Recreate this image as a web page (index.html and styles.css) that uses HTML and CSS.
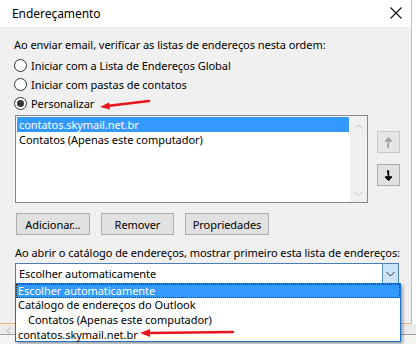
FILE: index.html
```html
<!DOCTYPE html>
<html lang="pt-BR">
<head>
    <meta charset="UTF-8">
    <title>Endereçamento</title>
    <link rel="stylesheet" href="styles.css">
</head>
<body>

    <div class="dialog">
        <!-- Title bar -->
        <div class="titlebar">
            <span class="title">Endereçamento</span>
            <svg class="close" width="12" height="12" viewBox="0 0 12 12">
                <path d="M0.5 0.5 L11.5 11.5 M11.5 0.5 L0.5 11.5" stroke="#111" stroke-width="1.1" fill="none"/>
            </svg>
        </div>

        <div class="content">
            <p class="label intro">Ao enviar email, verificar as listas de endereços nesta ordem:</p>

            <div class="radios">
                <label class="radio"><span class="dot"></span>Iniciar com a Lista de Endereços Global</label>
                <label class="radio"><span class="dot"></span>Iniciar com pastas de contatos</label>
                <label class="radio checked"><span class="dot"></span>Personalizar</label>
            </div>

            <div class="list-row">
                <div class="listbox">
                    <div class="items">
                        <div class="item selected">contatos.skymail.net.br</div>
                        <div class="item">Contatos (Apenas este computador)</div>
                    </div>
                    <div class="scrollbar">
                        <svg width="9" height="6" viewBox="0 0 9 6"><path d="M0.5 5 L4.5 1 L8.5 5" stroke="#c2c2c2" fill="none"/></svg>
                        <svg width="9" height="6" viewBox="0 0 9 6"><path d="M0.5 1 L4.5 5 L8.5 1" stroke="#c2c2c2" fill="none"/></svg>
                    </div>
                </div>
                <div class="move-buttons">
                    <button class="small-btn disabled">
                        <svg width="7" height="11" viewBox="0 0 7 11"><path d="M3.5 1 V10 H2 M0.5 4 L3.5 1 L6.5 4 Z" stroke="#a0a0a0" stroke-width="1.4" fill="#a0a0a0"/></svg>
                    </button>
                    <button class="small-btn">
                        <svg width="7" height="11" viewBox="0 0 7 11"><path d="M3.5 10 V1 H2 M0.5 7 L3.5 10 L6.5 7 Z" stroke="#000" stroke-width="1.4" fill="#000"/></svg>
                    </button>
                </div>
            </div>

            <div class="buttons">
                <button class="btn btn-add">Adicionar...</button>
                <button class="btn btn-remove">Remover</button>
                <button class="btn btn-props">Propriedades</button>
            </div>

            <p class="label second">Ao abrir o catálogo de endereços, mostrar primeiro esta lista de endereços:</p>

            <div class="combo">
                <span class="combo-text">Escolher automaticamente</span>
                <span class="combo-arrow">
                    <svg width="9" height="6" viewBox="0 0 9 6"><path d="M0.5 1 L4.5 5 L8.5 1" stroke="#333" fill="none"/></svg>
                </span>
            </div>
        </div>
    </div>

    <!-- window behind the dialog -->
    <div class="back-strip">
        <svg width="6" height="8" viewBox="0 0 6 8"><path d="M5 0.5 L1 4 L5 7.5" stroke="#b5b5b5" fill="none"/></svg>
    </div>

    <!-- Open drop-down list -->
    <div class="dropdown">
        <div class="drop-item active">Escolher automaticamente</div>
        <div class="drop-item">Catálogo de endereços do Outlook</div>
        <div class="drop-item indent">Contatos (Apenas este computador)</div>
        <div class="drop-item">contatos.skymail.net.br</div>
    </div>

    <!-- Red arrows drawn on the screenshot -->
    <svg class="arrow arrow-one" width="52" height="12" viewBox="0 0 52 12">
        <path d="M50 2 L8 7" stroke="#e8141c" stroke-width="2.4" fill="none" stroke-linecap="round"/>
        <path d="M1 8 L10 3.5 L11 10.5 Z" fill="#e8141c"/>
    </svg>
    <svg class="arrow arrow-two" width="96" height="10" viewBox="0 0 96 10">
        <path d="M94 4 L9 5" stroke="#e8141c" stroke-width="2.4" fill="none" stroke-linecap="round"/>
        <path d="M1 5 L11 1 L11 9 Z" fill="#e8141c"/>
    </svg>

</body>
</html>
```

FILE: styles.css
```css
/* General */
body {
    margin: 0;
    width: 416px;
    height: 344px;
    overflow: hidden;
    background: #ffffff;
    font-family: 'Noto Sans', 'Open Sans', sans-serif;
    font-size: 11px;
    letter-spacing: -0.05px;
    color: #000;
    position: relative;
}

.dialog {
    width: 411px;
    height: 323px;
    border-right: 1px solid #ebb574;
    border-bottom: 1px solid #ebb574;
    display: flex;
    flex-direction: column;
}

/* Title bar */
.titlebar {
    height: 27px;
    background: #fff;
    display: flex;
    align-items: center;
    justify-content: space-between;
    padding: 0 9px 0 12px;
}

.title {
    font-size: 12px;
    margin-top: -1px;
}

.close {
    margin-bottom: 1px;
}

/* Content area */
.content {
    flex: 1;
    background: #f0f0f0;
    padding: 0 0 0 15px;
}

.label {
    margin: 0;
    line-height: 15px;
    white-space: nowrap;
}

.intro {
    padding-top: 10px;
    margin-left: -1px;
}

/* Radios */
.radios {
    margin-top: 4px;
    display: flex;
    flex-direction: column;
}

.radio {
    height: 19px;
    display: flex;
    align-items: center;
    gap: 4px;
    margin-left: -1px;
}

.dot {
    width: 11px;
    height: 11px;
    border: 1px solid #333;
    border-radius: 50%;
    background: #fff;
    display: flex;
    align-items: center;
    justify-content: center;
}

.radio.checked .dot::after {
    content: "";
    width: 7px;
    height: 7px;
    border-radius: 50%;
    background: #333;
}

/* Address list */
.list-row {
    margin-top: 2px;
    display: flex;
    align-items: flex-start;
    gap: 9px;
}

.listbox {
    width: 351px;
    height: 86px;
    border: 1px solid #828790;
    background: #fff;
    display: flex;
}

.items {
    flex: 1;
    padding: 1px;
}

.item {
    height: 15px;
    line-height: 15px;
    padding-left: 2px;
    white-space: nowrap;
}

.item.selected {
    background: #3399ff;
    color: #fff;
}

.scrollbar {
    width: 17px;
    background: #f0f0f0;
    display: flex;
    flex-direction: column;
    justify-content: space-between;
    align-items: center;
    padding: 8px 0 5px;
}

.move-buttons {
    display: flex;
    flex-direction: column;
    gap: 11px;
    padding-top: 16px;
}

.small-btn {
    width: 23px;
    height: 22px;
    padding: 0;
    background: #e1e1e1;
    border: 1px solid #adadad;
    display: flex;
    align-items: center;
    justify-content: center;
}

.small-btn.disabled {
    background: #e6e6e6;
    border-color: #c8c8c8;
}

/* Buttons row */
.buttons {
    margin-top: 10px;
    display: flex;
    gap: 11px;
    padding-left: 1px;
}

.btn {
    height: 22px;
    padding: 0;
    background: #e1e1e1;
    border: 1px solid #adadad;
    font-family: inherit;
    font-size: 11px;
    letter-spacing: -0.05px;
    color: #000;
}

.btn-add { width: 74px; }
.btn-remove { width: 73px; }
.btn-props { width: 84px; }

.second {
    margin-top: 10px;
}

/* Combo box */
.combo {
    margin-top: 3px;
    width: 382px;
    height: 19px;
    border: 1px solid #4a7eb5;
    background: #fff;
    display: flex;
    align-items: center;
    justify-content: space-between;
}

.combo-text {
    padding-left: 3px;
}

.combo-arrow {
    width: 15px;
    height: 19px;
    background: #cce4f7;
    border-left: 1px solid #569de5;
    display: flex;
    align-items: center;
    justify-content: center;
}

/* Window behind */
.back-strip {
    height: 20px;
    display: flex;
    align-items: flex-start;
    padding: 3px 0 0 6px;
    box-sizing: border-box;
    background: linear-gradient(#ebebeb 10px, #a0a0a0 10px, #a0a0a0 11px, #f5f5f5 11px);
}

/* Drop-down list (popup over content) */
.dropdown {
    position: absolute;
    left: 15px;
    top: 283px;
    width: 384px;
    height: 57px;
    border: 1px solid #1a73c8;
    background: #fff;
    box-shadow: 2px 2px 3px rgba(0, 0, 0, 0.35);
}

.drop-item {
    height: 15px;
    line-height: 14px;
    padding-left: 2px;
    white-space: nowrap;
}

.drop-item.active {
    height: 14px;
    background: #3399ff;
    color: #fff;
    outline: 1px dotted #4a3000;
    outline-offset: -1px;
}

.drop-item.indent {
    padding-left: 12px;
}

/* Red arrows */
.arrow {
    position: absolute;
}

.arrow-one {
    left: 99px;
    top: 99px;
}

.arrow-two {
    left: 139px;
    top: 328px;
}
```
